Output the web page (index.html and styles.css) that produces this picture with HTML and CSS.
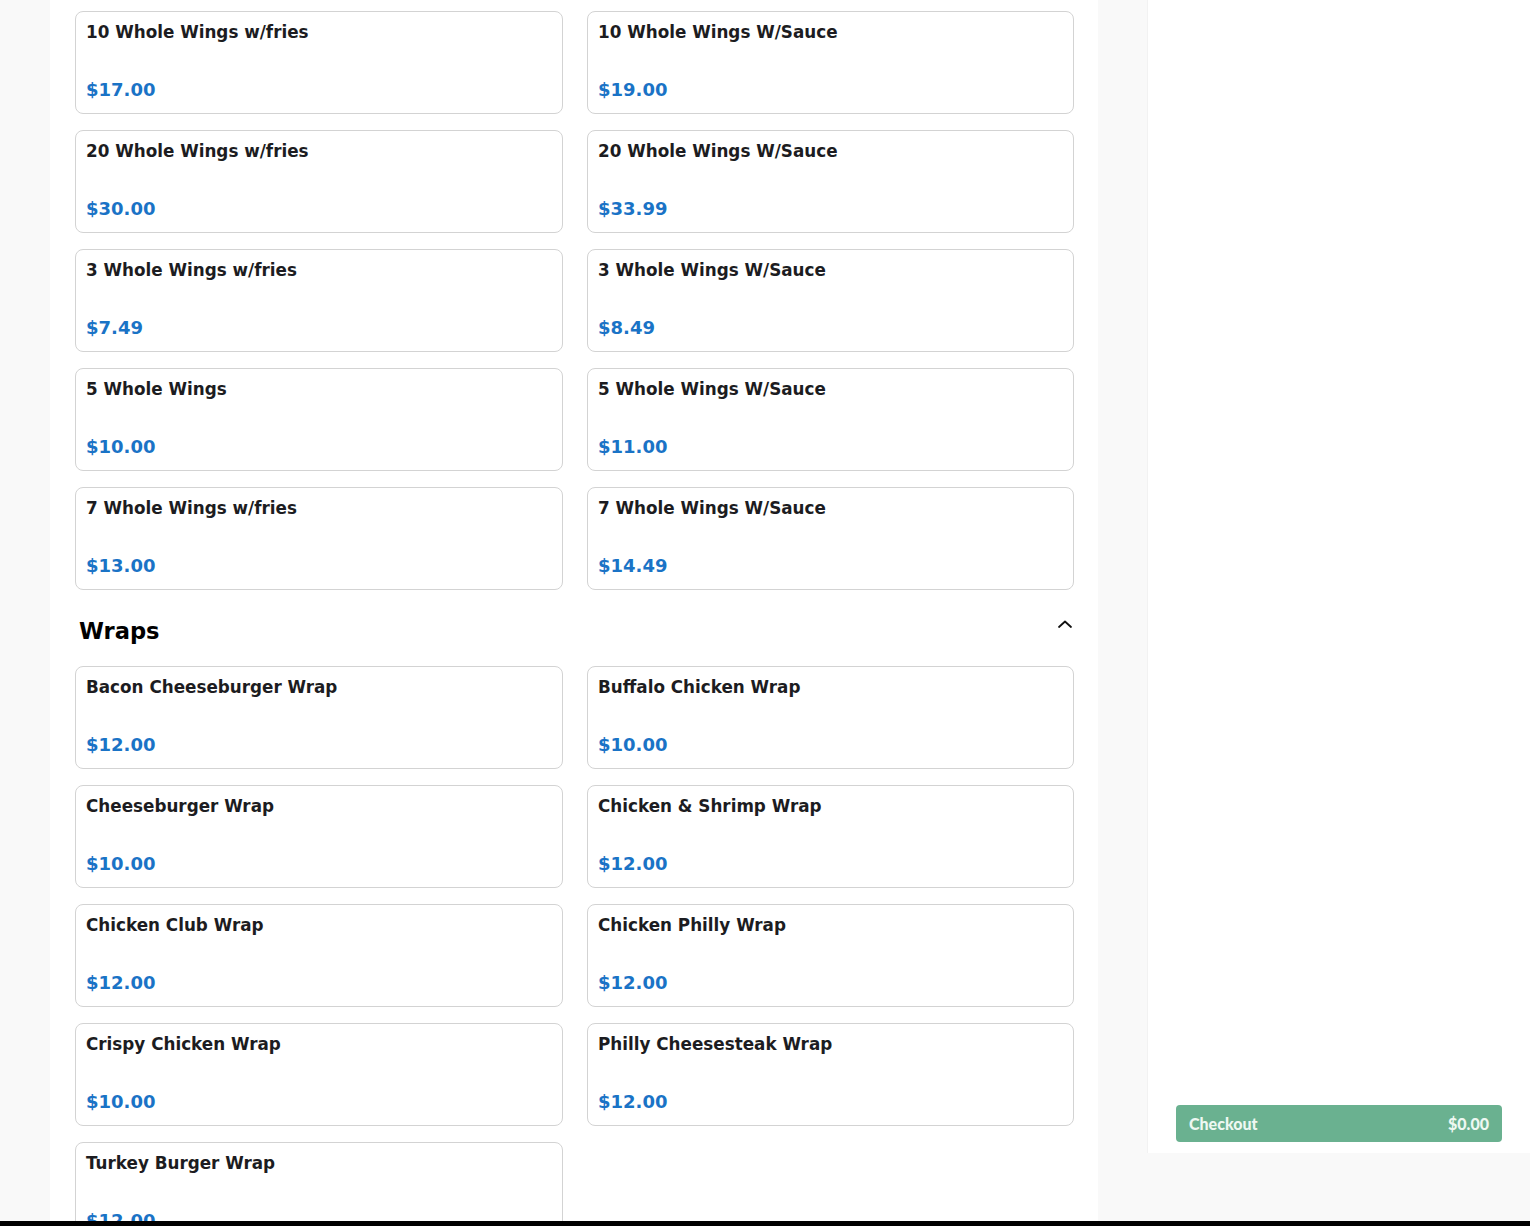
FILE: index.html
```html
<!DOCTYPE html>
<html>
<head>
<meta charset="utf-8">
<link rel="stylesheet" href="styles.css">
</head>
<body>
<div class="page">
  <main class="main">
    <div class="grid">
      <div class="card"><div class="name">10 Whole Wings w/fries</div><div class="price">$17.00</div></div>
      <div class="card"><div class="name">10 Whole Wings W/Sauce</div><div class="price">$19.00</div></div>
      <div class="card"><div class="name">20 Whole Wings w/fries</div><div class="price">$30.00</div></div>
      <div class="card"><div class="name">20 Whole Wings W/Sauce</div><div class="price">$33.99</div></div>
      <div class="card"><div class="name">3 Whole Wings w/fries</div><div class="price">$7.49</div></div>
      <div class="card"><div class="name">3 Whole Wings W/Sauce</div><div class="price">$8.49</div></div>
      <div class="card"><div class="name">5 Whole Wings</div><div class="price">$10.00</div></div>
      <div class="card"><div class="name">5 Whole Wings W/Sauce</div><div class="price">$11.00</div></div>
      <div class="card"><div class="name">7 Whole Wings w/fries</div><div class="price">$13.00</div></div>
      <div class="card"><div class="name">7 Whole Wings W/Sauce</div><div class="price">$14.49</div></div>
    </div>
    <div class="section-head">
      <h2 class="section-title">Wraps</h2>
      <svg class="chevron" width="16" height="10" viewBox="0 0 16 10"><path d="M2 8 L8 2.5 L14 8" fill="none" stroke="#111" stroke-width="1.8" stroke-linecap="round" stroke-linejoin="round"/></svg>
    </div>
    <div class="grid">
      <div class="card"><div class="name">Bacon Cheeseburger Wrap</div><div class="price">$12.00</div></div>
      <div class="card"><div class="name">Buffalo Chicken Wrap</div><div class="price">$10.00</div></div>
      <div class="card"><div class="name">Cheeseburger Wrap</div><div class="price">$10.00</div></div>
      <div class="card"><div class="name">Chicken &amp; Shrimp Wrap</div><div class="price">$12.00</div></div>
      <div class="card"><div class="name">Chicken Club Wrap</div><div class="price">$12.00</div></div>
      <div class="card"><div class="name">Chicken Philly Wrap</div><div class="price">$12.00</div></div>
      <div class="card"><div class="name">Crispy Chicken Wrap</div><div class="price">$10.00</div></div>
      <div class="card"><div class="name">Philly Cheesesteak Wrap</div><div class="price">$12.00</div></div>
      <div class="card"><div class="name">Turkey Burger Wrap</div><div class="price">$12.00</div></div>
    </div>
  </main>
  <aside class="sidebar">
    <button class="checkout"><span>Checkout</span><span>$0.00</span></button>
  </aside>
</div>
<div class="bottom-bar"></div>
</body>
</html>
```
FILE: styles.css
```css
html, body {
  margin: 0;
  padding: 0;
}
body {
  background: #f9f9f9;
  font-family: "DejaVu Sans", sans-serif;
  color: #1c1c21;
  height: 1226px;
  overflow: hidden;
}
.page {
  display: flex;
  align-items: flex-start;
  height: 1221px;
  overflow: hidden;
}
.main {
  margin-left: 50px;
  width: 1048px;
  min-height: 1221px;
  background: #fff;
  padding: 11px 25px 0;
  box-sizing: border-box;
  flex-shrink: 0;
}
.grid {
  display: grid;
  grid-template-columns: 488px 487px;
  column-gap: 24px;
  row-gap: 16px;
}
.card {
  box-sizing: border-box;
  height: 103px;
  border: 1px solid #d3d3d3;
  border-radius: 8px;
  padding: 10px 10px 12px;
  display: flex;
  flex-direction: column;
  justify-content: space-between;
}
.name {
  font-size: 16.8px;
  font-weight: bold;
  line-height: 20px;
  color: #1c1c21;
}
.price {
  font-size: 18px;
  font-weight: bold;
  line-height: 22px;
  color: #1a73c6;
}
.section-head {
  display: flex;
  justify-content: space-between;
  align-items: flex-start;
  padding: 26px 0 20px 4px;
}
.section-title {
  margin: 0;
  font-size: 22.6px;
  line-height: 30px;
  font-weight: bold;
  color: #000;
}
.chevron {
  margin-top: 3px;
}
.sidebar {
  margin-left: 49px;
  width: 383px;
  height: 1153px;
  background: #fff;
  border-left: 1px solid #f2f2f2;
  box-sizing: border-box;
  display: flex;
  flex-direction: column;
  justify-content: flex-end;
  padding: 0 28px 11px 28px;
  flex-shrink: 0;
}
.checkout {
  display: flex;
  justify-content: space-between;
  align-items: center;
  height: 37px;
  width: 100%;
  border: none;
  border-radius: 4px;
  background: #6ab190;
  color: #eef8f2;
  font-family: "Lato", "Open Sans", sans-serif;
  font-weight: 900;
  font-size: 16px;
  padding: 0 13px;
}
.bottom-bar {
  height: 5px;
  background: #000;
}
```
